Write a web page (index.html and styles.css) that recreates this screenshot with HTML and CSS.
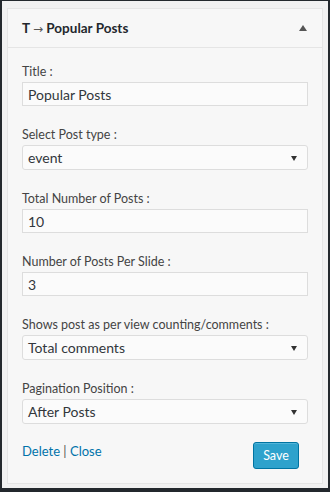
FILE: index.html
```html
<!DOCTYPE html>
<html lang="en">
<head>
    <meta charset="UTF-8">
    <title>Widget - Popular Posts</title>
    <link rel="stylesheet" href="styles.css">
</head>
<body>

    <div class="widget">
        <div class="widget-top">
            <h3>T <span class="arrow">&rarr;</span> Popular Posts</h3>
            <span class="toggle"></span>
        </div>

        <div class="widget-inside">
            <div class="field">
                <label>Title :</label>
                <input type="text" class="text-input" value="Popular Posts">
            </div>

            <div class="field">
                <label>Select Post type :</label>
                <div class="select">event</div>
            </div>

            <div class="field">
                <label>Total Number of Posts :</label>
                <input type="text" class="text-input" value="10">
            </div>

            <div class="field">
                <label>Number of Posts Per Slide :</label>
                <input type="text" class="text-input" value="3">
            </div>

            <div class="field">
                <label>Shows post as per view counting/comments :</label>
                <div class="select">Total comments</div>
            </div>

            <div class="field">
                <label>Pagination Position :</label>
                <div class="select">After Posts</div>
            </div>

            <div class="widget-actions">
                <div class="links">
                    <a href="#">Delete</a> | <a href="#">Close</a>
                </div>
                <button class="save-btn">Save</button>
            </div>
        </div>
    </div>

</body>
</html>
```

FILE: styles.css
```css
/* Frame */
html {
    background: #23282d;
    height: 100%;
}

body {
    font-family: Lato, 'Open Sans', sans-serif;
    font-size: 13px;
    color: #444;
    margin: 1px 2px 2px 2px;
    padding: 7px 5px 5px 5px;
    background: #f1f1f1;
    height: 475px;
}

.widget {
    border: 1px solid #e5e5e5;
    background: #f7f7f7;
    height: 476px;
    box-sizing: border-box;
}

/* Header */
.widget-top {
    display: flex;
    align-items: center;
    justify-content: space-between;
    height: 38px;
    padding: 0 15px 0 14px;
    border-bottom: 1px solid #e5e5e5;
}

.widget-top h3 {
    margin: 0;
    font-size: 13.5px;
    font-weight: 700;
    color: #23282d;
}

.widget-top .arrow {
    font-family: 'DejaVu Sans', sans-serif;
    font-weight: 400;
    font-size: 12px;
    color: #555;
}

.toggle {
    width: 0;
    height: 0;
    border-left: 4px solid transparent;
    border-right: 4px solid transparent;
    border-bottom: 6px solid #555;
}

/* Form */
.widget-inside {
    padding: 15px 14px 0 14px;
}

.field {
    margin-bottom: 20px;
}

.field label {
    display: block;
    font-size: 12.5px;
    line-height: 18px;
    margin-bottom: 1px;
    color: #444;
}

.text-input,
.select {
    display: block;
    width: 100%;
    box-sizing: border-box;
    height: 24px;
    margin: 0;
    padding: 0 5px;
    font-family: Lato, 'Open Sans', sans-serif;
    font-size: 14px;
    line-height: 22px;
    color: #32373c;
    background: #fbfbfb;
    border: 1px solid #ddd;
    border-radius: 0;
    outline: none;
}

.select {
    position: relative;
    height: 25px;
    line-height: 23px;
    border-radius: 3px;
}

.select::after {
    content: "";
    position: absolute;
    right: 10px;
    top: 10px;
    border-left: 3px solid transparent;
    border-right: 3px solid transparent;
    border-top: 5px solid #333;
}

/* Actions */
.widget-actions {
    display: flex;
    justify-content: space-between;
    align-items: flex-start;
    margin-top: -2px;
    padding-right: 9px;
}

.links {
    font-size: 13px;
    line-height: 18px;
    color: #555;
}

.links a {
    color: #0073aa;
    text-decoration: none;
}

.save-btn {
    font-family: Lato, 'Open Sans', sans-serif;
    font-size: 12.5px;
    color: #fff;
    background: #2ea2cc;
    border: 1px solid #0074a2;
    border-radius: 3px;
    box-shadow: inset 0 1px 0 rgba(120, 200, 230, 0.5);
    height: 27px;
    width: 46px;
    padding: 0;
    cursor: pointer;
}
```
